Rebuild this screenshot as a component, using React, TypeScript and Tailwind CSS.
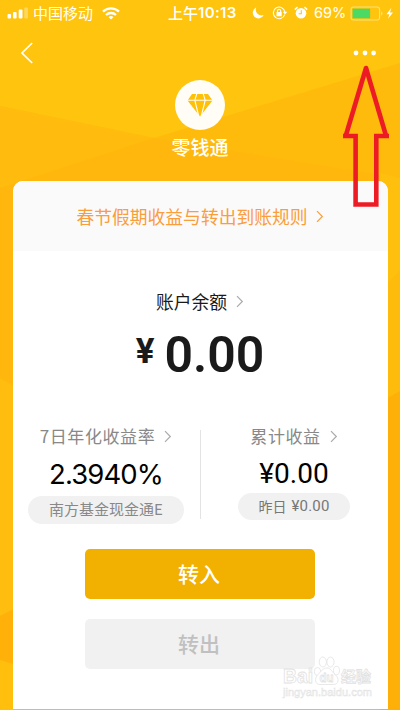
import type { ReactNode } from 'react';

const CJK = "font-['Noto_Sans_CJK_SC',sans-serif]";

function Chevron({ className }: { className: string }) {
  return (
    <svg width="8" height="13" viewBox="0 0 8 13" fill="none" stroke="currentColor" strokeWidth="1.2" className={className}>
      <path d="M1 1.2 6.3 6.5 1 11.8" />
    </svg>
  );
}

function Backdrop() {
  return (
    <svg className="absolute inset-0" width="400" height="710" viewBox="0 0 400 710">
      <rect width="400" height="710" fill="#ffbb0c" />
      <path d="M0 0H400V63L154 138 0 106Z" fill="#ffc40d" />
      <path d="M0 106 154 138 0 188Z" fill="#ffbc0e" />
      <path d="M154 138 400 178V290L0 420V188Z" fill="#ffb70d" />
      <path d="M380 173 400 178V272L380 290Z" fill="#ffbf0d" />
      <path d="M380 290 400 270V390L380 400Z" fill="#ffbb0c" />
      <path d="M380 402 400 391V710H380Z" fill="#ffb008" />
      <path d="M0 378 20 390V606L0 616Z" fill="#ffbe0f" />
      <path d="M0 616 20 606V668L0 660Z" fill="#ffb009" />
      <path d="M0 660 20 666V710H0Z" fill="#ffbf0c" />
    </svg>
  );
}

function StatusBar() {
  return (
    <div className="flex h-[26px] items-center pl-[7px] text-white">
      <svg width="22" height="12" viewBox="0 0 22 12" fill="currentColor">
        <rect x="0.5" y="7" width="3.6" height="4.5" rx="1" />
        <rect x="6" y="5" width="3.6" height="6.5" rx="1" />
        <rect x="11.7" y="2.5" width="3.8" height="9" rx="1" />
        <rect x="17.3" y="0.5" width="3.7" height="11" rx="1" opacity="0.35" />
      </svg>
      <span className="ml-[4px] w-[61px] text-[15px] leading-5 whitespace-nowrap">中国移动</span>
      <svg className="ml-[8px]" width="18" height="13" viewBox="0 0 18 13" fill="none" stroke="currentColor" strokeWidth="2.3">
        <path d="M1 4.6a11.5 11.5 0 0 1 16 0" />
        <path d="M4 8a7.2 7.2 0 0 1 10 0" />
        <path d="M6.5 10.3a3.6 3.6 0 0 1 5 0L9 12.6Z" fill="currentColor" stroke="none" />
      </svg>
      <div className="ml-[48px] flex w-[70px] items-center whitespace-nowrap">
        <span className="text-[15px] leading-5 font-medium">上午</span>
        <span className="font-['Inter',sans-serif] text-[15px] leading-5 font-semibold tracking-[0.35px]">10:13</span>
      </div>
      <svg className="ml-[14px]" width="12" height="12" viewBox="0 0 12 12" fill="currentColor">
        <path d="M4.2.5A5.7 5.7 0 1 0 11.7 8 5.8 5.8 0 0 1 4.2.5Z" />
      </svg>
      <svg className="ml-[8px]" width="16" height="14" viewBox="0 0 16 14" fill="none" stroke="currentColor" strokeWidth="1.1">
        <path d="M12.7 8.6A5.8 5.8 0 1 1 12.9 6" />
        <path d="M10.7 5.8h4.6l-2.3 2.8Z" fill="currentColor" stroke="none" />
        <rect x="4.5" y="6" width="5.2" height="4.2" rx=".5" fill="currentColor" stroke="none" />
        <path d="M5.5 6.2V5a1.6 1.6 0 0 1 3.2 0v1.2" />
      </svg>
      <svg className="ml-[6px]" width="14" height="14" viewBox="0 0 14 14">
        <circle cx="7" cy="7.3" r="5.3" fill="white" />
        <path d="M.8 3.6 3.6 1.2M13.2 3.6l-2.8-2.4" stroke="white" strokeWidth="1.6" />
        <path d="M7.3 4.2v3.6H4.6" fill="none" stroke="#ffc40d" strokeWidth="1.1" />
      </svg>
      <span className="ml-[6px] w-[34px] font-['Inter',sans-serif] text-[14.5px] leading-5 whitespace-nowrap">69%</span>
      <svg className="ml-[2px]" width="45" height="15" viewBox="0 0 45 15" fill="none">
        <rect x="1.1" y="1" width="28.5" height="13" rx="2.5" stroke="#ffe07a" strokeWidth="1.1" />
        <rect x="2.6" y="2.7" width="17.5" height="9.6" fill="#4cd964" />
        <path d="M31.2 5.2c1.800.7 1.800 3.800 0 4.500Z" fill="#ffe07a" />
        <path d="M41.400 1.800 36.500 8.200h2.900L38 12.800l5-6.200h-3Z" fill="white" />
      </svg>
    </div>
  );
}

function Stat({ label, children }: { label: string; children: ReactNode }) {
  return (
    <div className="flex flex-1 flex-col items-center">
      <div className="flex h-[26px] items-center gap-[9px] text-[#888]">
        <span className="text-[17px] leading-6 tracking-[0.6px] whitespace-nowrap">{label}</span>
        <Chevron className="text-[#aaa]" />
      </div>
      {children}
    </div>
  );
}

function BaiduWatermark() {
  return (
    <div className="absolute top-[654px] left-[282px] h-[46px] w-[96px]">
      <svg width="96" height="46" viewBox="0 0 96 46" fill="white" stroke="#e2e2e2" strokeWidth="0.8">
        <text x="1" y="29" fontSize="20" fontWeight="700" textLength="30" lengthAdjust="spacingAndGlyphs" className="font-['Liberation_Sans',sans-serif]">Bai</text>
        <ellipse cx="35.5" cy="17.500" rx="3.2" ry="4" />
        <ellipse cx="40.800" cy="8" rx="3.6" ry="5" />
        <ellipse cx="48.500" cy="8" rx="3.6" ry="5" />
        <ellipse cx="54.500" cy="16.500" rx="3" ry="4.200" />
        <path d="M45 14c4 0 5 4 8 6.500 5 4 3.500 10-1.500 10H38c-5 0-6-6-2-10 3-3 5-6.500 9-6.500Z" />
        <text x="37.500" y="28" fontSize="13" fontWeight="700" textLength="14" lengthAdjust="spacingAndGlyphs" className="font-['Liberation_Sans',sans-serif]">du</text>
        <text x="59" y="28" fontSize="15" fontWeight="700" textLength="30" className="font-['Noto_Sans_CJK_SC',sans-serif]">经验</text>
        <text x="1" y="42" fontSize="11" fill="#f4f4f4" strokeWidth="0.4" textLength="89" className="font-['Liberation_Sans',sans-serif]">jingyan.baidu.com</text>
      </svg>
    </div>
  );
}

export default function App() {
  return (
    <div className={`relative h-[710px] w-[400px] overflow-hidden ${CJK}`}>
      <Backdrop />
      <div className="relative flex h-full flex-col">
        <StatusBar />

        {/* Navigation */}
        <div className="flex h-[53px] items-center justify-between pr-[23px] pl-[20px]">
          <svg width="14" height="22" viewBox="0 0 14 22" fill="none" stroke="white" strokeWidth="1.7">
            <path d="M12.2 1 2 11l10.200 10" />
          </svg>
          <svg width="24" height="6" viewBox="0 0 24 6" fill="white">
            <circle cx="3" cy="3" r="2.400" />
            <circle cx="12" cy="3" r="2.400" />
            <circle cx="20.600" cy="3" r="2.400" />
          </svg>
        </div>

        {/* Account badge */}
        <div className="flex h-[102px] flex-col items-center pt-px">
          <div className="flex size-[50px] items-center justify-center rounded-full bg-[#fffdf5]">
            <svg width="26" height="24" viewBox="0 0 26 24">
              <path d="M5 1h16L25.500 7.500 13 23.500.500 7.500Z" fill="#ffc008" />
              <path d="M0 7.200h26M10 0 7.800 7.200 11.800 23.500M16 0l2.200 7.200-4 16.300" fill="none" stroke="#fffdf5" strokeWidth="1.100" />
            </svg>
          </div>
          <h1 className="mt-[3px] text-[19px] leading-7 font-medium text-white">零钱通</h1>
        </div>

        <div className="mx-[12.5px] flex h-[528px] flex-col overflow-hidden rounded-t-[10px] bg-white">
          <div className="flex h-[70px] shrink-0 items-center justify-center gap-[8px] bg-[#fafafa] text-[#fa9d3b]">
            <span className="text-[17.8px] leading-6 whitespace-nowrap">春节假期收益与转出到账规则</span>
            <Chevron className="" />
          </div>

          {/* Balance */}
          <div className="mt-[38px] flex h-[24px] items-center justify-center gap-[9px] text-[#1a1a1a]">
            <span className="text-[17.8px] leading-6">账户余额</span>
            <Chevron className="text-[#aaa]" />
          </div>
          <div className="mt-[12px] flex h-[60px] items-start justify-center font-['Roboto',sans-serif] text-[#1a1a1a]">
            <span className="mt-[6px] text-[35px] leading-[41px] font-bold">¥</span>
            <span className="ml-[10px] text-[50px] leading-[60px] font-semibold">0.00</span>
          </div>

          {/* Earnings */}
          <div className="mt-[38px] flex h-[110px] items-start">
            <Stat label="7日年化收益率">
              <span className="mt-[7px] font-['Inter',sans-serif] text-[27.5px] leading-[37px] tracking-[-0.9px] text-black">2.3940%</span>
              <div className="mt-[3px] flex h-[28px] w-[156px] items-center justify-center rounded-full bg-[#f1f1f1] pb-px text-[15px] text-[#888]">
                南方基金现金通E
              </div>
            </Stat>
            <div className="mt-[7px] h-[89px] w-px bg-[#e3e3e3]" />
            <Stat label="累计收益">
              <span className="mt-[6px] font-['Roboto',sans-serif] text-[28px] leading-[37px] text-black">¥0.00</span>
              <div className="mt-[1px] flex h-[27px] w-[112px] items-center justify-center gap-[5px] rounded-full bg-[#f1f1f1] text-[14px] text-[#777]">
                昨日
                <span className="font-['Roboto',sans-serif] text-[15px] tracking-[0.2px]">¥0.00</span>
              </div>
            </Stat>
          </div>

          <div className="mt-[16px] flex flex-col items-center gap-[20px] text-[21px] leading-[48px]">
            <button className="h-[50px] w-[230px] rounded-[5px] bg-[#f2b000] pr-[2px] pb-[2px] font-medium text-white">转入</button>
            <button className="h-[50px] w-[230px] rounded-[5px] bg-[#f1f1f1] pr-[2px] pb-[2px] font-medium text-[#c0c0c0]">转出</button>
          </div>
        </div>
      </div>

      <BaiduWatermark />

      {/* Arrow pointing at the menu dots */}
      <svg className="absolute top-[64px] left-[342px]" width="48" height="145" viewBox="0 0 48 145" fill="none" stroke="#ed1c24" strokeWidth="4.6">
        <path d="M3.400 73 24 4 44.400 73" strokeLinejoin="round" />
        <path d="M1 72H13.600V140.500H34.300V72H47" />
      </svg>
    </div>
  );
}
